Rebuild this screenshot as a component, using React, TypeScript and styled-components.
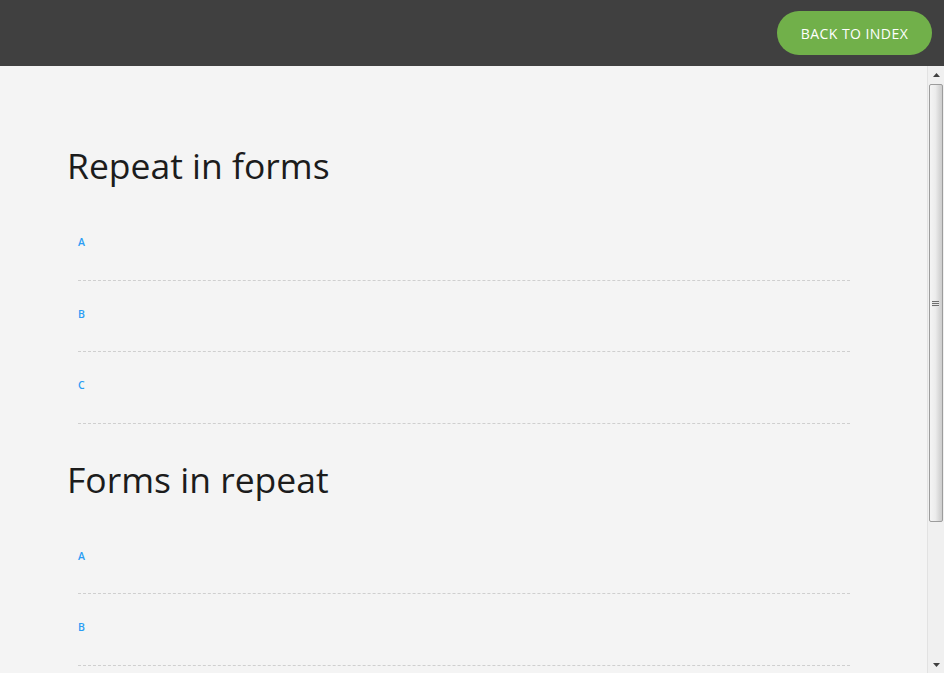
import React from "react";
import styled, { createGlobalStyle } from "styled-components";

const Global = createGlobalStyle`
  html, body { margin: 0; padding: 0; height: 100%; overflow: hidden; }
  body { font-family: "Open Sans", "Liberation Sans", sans-serif; background: #f4f4f4; }
`;

const Page = styled.div`
  display: flex;
  flex-direction: column;
  height: 100vh;
`;

const Header = styled.header`
  flex: 0 0 66px;
  background: #404040;
  display: flex;
  align-items: center;
  justify-content: flex-end;
  padding-right: 12px;
`;

const BackButton = styled.a`
  display: inline-flex;
  align-items: center;
  justify-content: center;
  width: 155px;
  height: 44px;
  border-radius: 22px;
  background: #71b04a;
  color: #ffffff;
  font-size: 14px;
  letter-spacing: 0.45px;
  text-decoration: none;
`;

const Body = styled.div`
  flex: 1;
  display: flex;
  min-height: 0;
`;

const Scroller = styled.main`
  flex: 1;
  overflow: hidden;
  background: #f4f4f4;
`;

const Content = styled.div`
  padding: 77px 67px 40px 67px;
`;

const Section = styled.section`
  margin-bottom: 33px;
`;

const Title = styled.h1`
  margin: 0 0 22px 0;
  font-size: 35.5px;
  font-weight: 400;
  line-height: 44px;
  color: #1c1c1c;
`;

const Row = styled.div`
  margin: 0 10px 0 11px;
  height: 71.5px;
  border-bottom: 1px dashed #cfcfcf;
  box-sizing: border-box;
`;

const Label = styled.label`
  display: block;
  padding-top: 26px;
  font-size: 10.5px;
  font-weight: 600;
  color: #2a9df4;
  line-height: 14px;
`;

const ScrollBar = styled.div`
  flex: 0 0 17px;
  display: flex;
  flex-direction: column;
  background: #f0f0f0;
  border-left: 1px solid #e2e2e2;
  box-sizing: border-box;
`;

const ArrowButton = styled.div`
  flex: 0 0 17px;
  display: flex;
  align-items: center;
  justify-content: center;
`;

const Track = styled.div`
  flex: 1;
  padding: 1px 1px 0 1px;
`;

const Thumb = styled.div`
  height: 438px;
  box-sizing: border-box;
  border: 1px solid #9c9c9c;
  border-radius: 2px;
  background: linear-gradient(to right, #f4f4f4 0%, #ececec 45%, #d6d6d6 80%, #cdcdcd 100%);
  display: flex;
  align-items: center;
  justify-content: center;
`;

const Grip = styled.div`
  width: 7px;
  display: flex;
  flex-direction: column;
  gap: 1px;
  margin-left: -1px;
`;

const GripLine = styled.span`
  display: block;
  height: 1px;
  background: #6e6e6e;
  box-shadow: 0 1px 0 #e6e6e6;
`;

const sections = [
  { title: "Repeat in forms", rows: ["A", "B", "C"] },
  { title: "Forms in repeat", rows: ["A", "B", "C"] },
];

function Arrow({ down }: { down?: boolean }) {
  return (
    <svg width="7" height="4" viewBox="0 0 7 4">
      <path
        d={down ? "M0 0 H7 L3.5 4 Z" : "M3.5 0 L7 4 H0 Z"}
        fill="#404040"
      />
    </svg>
  );
}

export default function App() {
  return (
    <>
      <Global />
      <Page>
        <Header>
          <BackButton href="#">BACK TO INDEX</BackButton>
        </Header>
        <Body>
          <Scroller>
            <Content>
              {sections.map((s) => (
                <Section key={s.title}>
                  <Title>{s.title}</Title>
                  {s.rows.map((r) => (
                    <Row key={r}>
                      <Label>{r}</Label>
                    </Row>
                  ))}
                </Section>
              ))}
            </Content>
          </Scroller>
          <ScrollBar>
            <ArrowButton>
              <Arrow />
            </ArrowButton>
            <Track>
              <Thumb>
                <Grip>
                  <GripLine />
                  <GripLine />
                  <GripLine />
                </Grip>
              </Thumb>
            </Track>
            <ArrowButton>
              <Arrow down />
            </ArrowButton>
          </ScrollBar>
        </Body>
      </Page>
    </>
  );
}
